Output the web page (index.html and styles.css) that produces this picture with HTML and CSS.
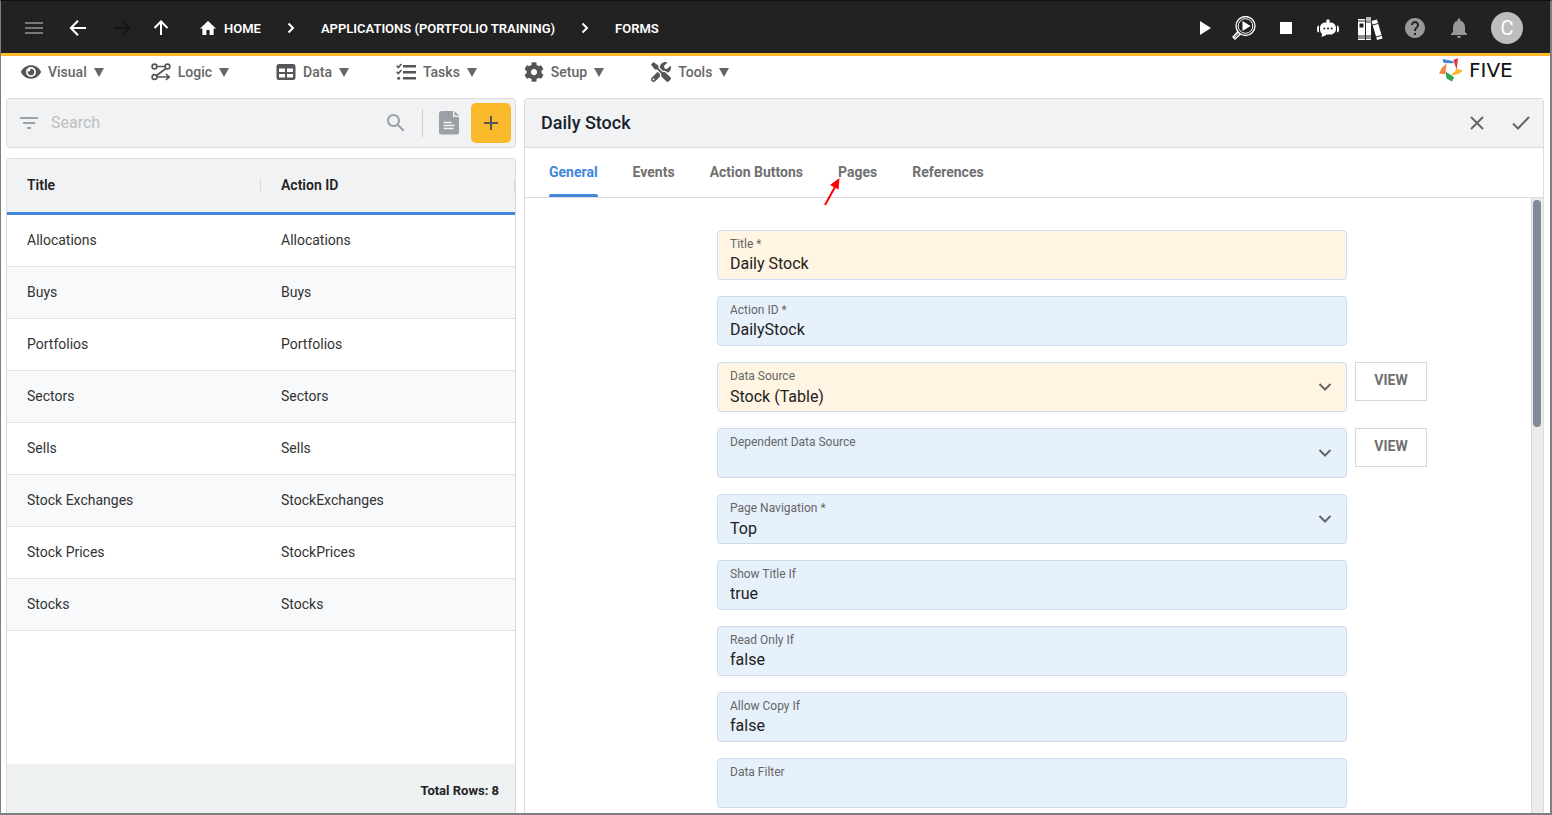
FILE: index.html
```
<!DOCTYPE html>
<html lang="en">
<head>
<meta charset="utf-8">
<title>Five - Forms</title>
<link rel="stylesheet" href="styles.css">
</head>
<body>
<div class="app">
  <header class="topbar">
    <button class="icon-btn dim" aria-label="Menu"><svg width="24" height="24" viewBox="0 0 24 24"><path d="M3 18h18v-2H3v2zm0-5h18v-2H3v2zm0-7v2h18V6H3z"/></svg></button>
    <button class="icon-btn" aria-label="Back"><svg width="24" height="24" viewBox="0 0 24 24"><path class="line" d="M20 12H5M12 4.700 4.800 12l7.200 7.300"/></svg></button>
    <button class="icon-btn off" aria-label="Forward" disabled><svg width="24" height="24" viewBox="0 0 24 24"><path class="line" d="M4 12h15M12 4.700 19.200 12 12 19.300"/></svg></button>
    <button class="icon-btn up" aria-label="Up"><svg width="24" height="24" viewBox="0 0 24 24"><path class="line" d="M12 19V6M5.500 12 12 5.500l6.500 6.500"/></svg></button>
    <nav class="crumbs" aria-label="Breadcrumb">
      <a class="crumb" href="#"><svg width="16" height="14" viewBox="2 3 20 17" preserveAspectRatio="none"><path d="M10 20v-6h4v6h5v-8h3L12 3 2 12h3v8z"/></svg>HOME</a>
      <svg width="10" height="12" viewBox="0 0 10 12"><path class="line" d="M2.500 1.500 7 6l-4.500 4.500"/></svg>
      <a class="crumb" href="#">APPLICATIONS (PORTFOLIO TRAINING)</a>
      <svg width="10" height="12" viewBox="0 0 10 12"><path class="line" d="M2.500 1.500 7 6l-4.500 4.500"/></svg>
      <a class="crumb" href="#">FORMS</a>
    </nav>
    <div class="actions">
      <button class="tool run" aria-label="Run"><svg width="12" height="14" viewBox="0 0 12 14"><path d="M1 0v14l11-7z"/></svg></button>
      <button class="tool" aria-label="Inspect"><svg width="24" height="24" viewBox="0 0 24 24"><circle cx="13.500" cy="10" r="9.500" fill="none" stroke="#fff" stroke-width="1.300"/><circle cx="13.500" cy="10" r="7.300" fill="none" stroke="#fff" stroke-width="1"/><path d="M10.500 5v10l8-5z"/><path d="M6 15.500 1 21l2 2 5.500-5" fill="none" stroke="#fff" stroke-width="1.400"/><path d="M7 16.500 2 22" stroke="#fff"/></svg></button>
      <button class="tool" aria-label="Stop"><svg width="12" height="12" viewBox="0 0 12 12"><path d="M0 0h12v12H0z"/></svg></button>
      <button class="tool" aria-label="Assistant"><svg width="22" height="18" viewBox="0 0 22 18"><circle cx="11" cy="2" r="1.700"/><path d="M10 2h2v3h-2z"/><path d="M8.500 3.500h5c3.500 0 5.500 2.500 5.500 6s-2 6-5.500 6h-4C8 17 6.500 17.500 4 17.500c1-.8 1.200-1.700 1-2.500C3.500 14 3 12 3 9.500c0-3.500 2-6 5.500-6zM2 6.500v7c-1.300 0-2-.8-2-3.500s.7-3.500 2-3.500zM20 6.500v7c1.300 0 2-.8 2-3.500s-.7-3.500-2-3.500z"/><g fill="#222"><circle cx="7.300" cy="9.500" r="1"/><circle cx="11" cy="9.500" r="1"/><circle cx="14.700" cy="9.500" r="1"/></g></svg></button>
      <button class="tool" aria-label="Library"><svg width="25" height="25" viewBox="0 0 25 25"><path d="M0 3h7v21H0zM8 1h5v23H8zM13.500 5l5.500-1.500 5.500 19-5.500 1.500z"/><path fill="#bbb" d="M8 1h5v4H8z"/><path d="M1.500 7.500h4v4h-4z" fill="#222"/><path d="M0 5h7M0 20h13M0 22h13M8 6h5M14.500 9l5.500-1.500M18 21l5.500-1.500" stroke="#222" stroke-width="1"/></svg></button>
      <button class="tool grey first" aria-label="Help"><svg width="24" height="24" viewBox="0 0 24 24"><path d="M12 2C6.480 2 2 6.480 2 12s4.480 10 10 10 10-4.480 10-10S17.520 2 12 2zm1 17h-2v-2h2v2zm2.070-7.750-.9.920C13.450 12.900 13 13.500 13 15h-2v-.5c0-1.100.45-2.100 1.170-2.830l1.240-1.260c.37-.36.590-.86.590-1.410 0-1.100-.9-2-2-2s-2 .9-2 2H8c0-2.210 1.790-4 4-4s4 1.790 4 4c0 .88-.36 1.680-.93 2.250z"/></svg></button>
      <button class="tool grey" aria-label="Notifications"><svg width="24" height="24" viewBox="0 0 24 24"><path d="M12 22c1.100 0 2-.9 2-2h-4c0 1.100.89 2 2 2zm6-6v-5c0-3.070-1.640-5.640-4.500-6.320V4c0-.83-.67-1.500-1.500-1.500s-1.500.67-1.500 1.500v.68C7.630 5.360 6 7.920 6 11v5l-2 2v1h16v-1l-2-2z"/></svg></button>
      <button class="avatar" aria-label="Account">C</button>
    </div>
  </header>

  <div class="menubar">
    <nav class="menus">
      <button class="menu"><svg width="20" height="20" viewBox="0 0 576 512"><path d="M572.520 241.400C518.290 135.590 410.930 64 288 64S57.680 135.640 3.480 241.410a32.350 32.350 0 0 0 0 29.190C57.710 376.410 165.070 448 288 448s230.320-71.640 284.520-177.410a32.350 32.350 0 0 0 0-29.190zM288 400a144 144 0 1 1 144-144 143.930 143.930 0 0 1-144 144zm0-240a95.310 95.310 0 0 0-25.310 3.790 47.850 47.850 0 0 1-66.900 66.900A95.780 95.780 0 1 0 288 160z"/></svg><span>Visual</span><i class="caret"></i></button>
      <button class="menu"><svg width="20" height="20" viewBox="0 0 20 20"><g fill="none" stroke="#555" stroke-width="1.600"><circle cx="3.500" cy="4.500" r="2.400"/><circle cx="16.500" cy="4.500" r="2.400"/><circle cx="3.500" cy="15" r="2.400"/><path d="M6 4.500h8M15 6.500 5.500 13.500M6 15h12M15 12l3.200 3-3.200 3"/></g></svg><span>Logic</span><i class="caret"></i></button>
      <button class="menu"><svg width="20" height="20" viewBox="0 0 20 20"><path fill-rule="evenodd" d="M3 2h14a2.500 2.500 0 0 1 2.500 2.500v11A2.500 2.500 0 0 1 17 18H3a2.500 2.500 0 0 1-2.500-2.500v-11A2.500 2.500 0 0 1 3 2zm0 4.500v3.500h6V6.500zm8 0v3.500h6V6.500zM3 12v3.500h6V12zm8 0v3.500h6V12z"/></svg><span>Data</span><i class="caret"></i></button>
      <button class="menu"><svg width="20" height="20" viewBox="0 0 20 20"><path d="M7 3h13v2.500H7zM7 9h13v2.500H7zM7 15h13v2.500H7z"/><circle cx="2.700" cy="16.300" r="1.500"/><path d="m.7 3.800 1.600 1.700 3.200-3.500M.7 9.800l1.600 1.700L5.500 8" fill="none" stroke="#555" stroke-width="1.600"/></svg><span>Tasks</span><i class="caret"></i></button>
      <button class="menu"><svg width="20" height="20" viewBox="0 0 512 512"><path d="M487.400 315.700l-42.600-24.600c4.300-23.200 4.300-47 0-70.200l42.600-24.600c4.900-2.800 7.100-8.600 5.500-14-11.100-35.600-30-67.800-54.700-94.600-3.800-4.100-10-5.100-14.800-2.300L380.800 110c-17.900-15.400-38.500-27.300-60.800-35.100V25.800c0-5.600-3.900-10.500-9.400-11.700-36.700-8.200-74.300-7.800-109.200 0-5.500 1.200-9.400 6.100-9.400 11.700V75c-22.200 7.900-42.800 19.800-60.800 35.100L88.700 85.500c-4.900-2.800-11-1.900-14.800 2.300-24.700 26.700-43.600 58.900-54.700 94.600-1.700 5.400.6 11.200 5.500 14L67.300 221c-4.300 23.200-4.300 47 0 70.200l-42.600 24.600c-4.900 2.800-7.100 8.600-5.500 14 11.100 35.600 30 67.800 54.700 94.600 3.800 4.100 10 5.100 14.800 2.300l42.600-24.600c17.900 15.400 38.500 27.300 60.800 35.100v49.200c0 5.600 3.900 10.500 9.400 11.700 36.700 8.200 74.300 7.800 109.200 0 5.500-1.200 9.400-6.100 9.400-11.700v-49.200c22.200-7.900 42.800-19.800 60.800-35.100l42.600 24.600c4.900 2.800 11 1.900 14.800-2.300 24.700-26.700 43.600-58.900 54.700-94.600 1.500-5.500-.7-11.300-5.600-14.100zM256 336c-44.100 0-80-35.900-80-80s35.900-80 80-80 80 35.900 80 80-35.900 80-80 80z"/></svg><span>Setup</span><i class="caret"></i></button>
      <button class="menu"><svg width="20" height="20" viewBox="0 0 512 512"><path d="M501.100 395.700L384 278.600c-23.100-23.100-57.600-27.600-85.400-13.900L192 158.100V96L64 0 0 64l96 128h62.100l106.600 106.600c-13.600 27.800-9.200 62.300 13.900 85.400l117.100 117.100c14.600 14.600 38.200 14.600 52.700 0l52.700-52.700c14.500-14.600 14.500-38.200 0-52.700zM331.700 225c28.300 0 54.900 11 74.900 31l19.400 19.400c15.800-6.900 30.800-16.500 43.800-29.500 37.100-37.100 49.700-89.300 37.900-136.700-2.200-9-13.500-12.100-20.100-5.500l-74.400 74.400-67.900-11.300L334 98.900l74.400-74.400c6.600-6.600 3.400-17.900-5.700-20.200-47.400-11.700-99.600.9-136.600 37.900-28.500 28.500-41.900 66.100-41.200 103.600l82.100 82.100c8.100-1.900 16.500-2.900 24.700-2.900zm-103.900 82l-56.700-56.700L18.700 402.800c-25 25-25 65.500 0 90.500s65.500 25 90.500 0l123.600-123.600c-7.600-19.900-9.900-41.600-5-62.700zM64 472c-13.200 0-24-10.800-24-24 0-13.300 10.700-24 24-24s24 10.700 24 24c0 13.200-10.700 24-24 24z"/></svg><span>Tools</span><i class="caret"></i></button>
    </nav>
    <a class="brand" href="#">
      <svg width="24" height="24" viewBox="0 0 24 24"><path fill="#4286dc" d="M3.500 1l1 4L15 5.300 13.500 3z"/><path fill="#e5353c" d="M19 .3 14.300 2l3.400 10z"/><path fill="#fbb829" d="M24 12.700l-5.500-2L11.500 17.500l8-1.500z"/><path fill="#34a556" d="M6.500 13.500l8.700 5.800-2.300 4.200L7.500 20.500z"/><path fill="#f5823a" d="M7.700 5.300 6 16.300l-6-.8 2.700-5.200z"/></svg>
      <span>FIVE</span>
    </a>
  </div>

  <main class="workspace">
    <section class="side">
      <div class="searchbar">
        <svg width="24" height="24" viewBox="0 0 24 24"><path d="M10 18h4v-2h-4v2zM3 6v2h18V6H3zm3 7h12v-2H6v2z"/></svg>
        <input class="search" type="text" placeholder="Search" aria-label="Search">
        <button class="plain" aria-label="Find"><svg width="24" height="24" viewBox="0 0 24 24"><path d="M15.500 14h-.79l-.28-.27C15.410 12.590 16 11.110 16 9.500 16 5.910 13.090 3 9.500 3S3 5.910 3 9.500 5.910 16 9.500 16c1.610 0 3.090-.59 4.230-1.570l.27.28v.79l5 4.990L20.490 19l-4.990-5zm-6 0C7.010 14 5 11.990 5 9.500S7.010 5 9.500 5 14 7.010 14 9.500 11.990 14 9.500 14z"/></svg></button>
        <span class="rule"></span>
        <button class="plain" aria-label="Document"><svg width="20" height="24" viewBox="0 0 20 24"><path d="M3 0h11v6h6v15a2.500 2.500 0 0 1-2.500 2.500h-15A2.500 2.500 0 0 1 0 21V3a3 3 0 0 1 3-3zm12.500 0L20 4.500h-4.500z"/><path d="M4.500 11.500h8M4.500 14.500h11M4.500 17.500h10" stroke="#f1f2f4" stroke-width="1.300"/></svg></button>
        <button class="add" aria-label="Add"><svg width="14" height="14" viewBox="0 0 14 14"><path d="M6 0h2v6h6v2H8v6H6V8H0V6h6z"/></svg></button>
      </div>
      <div class="grid">
        <table class="rows">
          <thead><tr><th>Title</th><th>Action ID</th></tr></thead>
          <tbody>
            <tr><td>Allocations</td><td>Allocations</td></tr>
            <tr><td>Buys</td><td>Buys</td></tr>
            <tr><td>Portfolios</td><td>Portfolios</td></tr>
            <tr><td>Sectors</td><td>Sectors</td></tr>
            <tr><td>Sells</td><td>Sells</td></tr>
            <tr><td>Stock Exchanges</td><td>StockExchanges</td></tr>
            <tr><td>Stock Prices</td><td>StockPrices</td></tr>
            <tr><td>Stocks</td><td>Stocks</td></tr>
          </tbody>
        </table>
        <div class="total">Total Rows: 8</div>
      </div>
    </section>

    <section class="detail">
      <div class="detail-head">
        <h1>Daily Stock</h1>
        <button class="plain" aria-label="Cancel"><svg width="14" height="14" viewBox="0 0 14 14"><path class="thin" d="m1 1 12 12M13 1 1 13"/></svg></button>
        <button class="plain" aria-label="Save"><svg width="18" height="14" viewBox="0 0 18 14"><path class="thin" d="m1 7.500 5 5L17 1"/></svg></button>
      </div>
      <div class="tabs">
        <button class="tab active">General</button>
        <button class="tab">Events</button>
        <button class="tab">Action Buttons</button>
        <button class="tab">Pages<svg class="pointer" width="18" height="30" viewBox="0 0 18 30"><path d="M1 28 11 10" stroke="#f00" stroke-width="2"/><path fill="#f00" d="M15.500 1 6 8l8.500 4.500z"/></svg></button>
        <button class="tab">References</button>
      </div>
      <div class="body">
        <form class="form">
          <label class="field edited"><span>Title *</span><input type="text" value="Daily Stock"></label>
          <label class="field"><span>Action ID *</span><input type="text" value="DailyStock"></label>
          <label class="field edited"><span>Data Source</span><select><option>Stock (Table)</option></select><svg class="chev" width="14" height="8" viewBox="0 0 14 8"><path d="m1.500 1 5.500 5.500L12.500 1"/></svg></label>
          <button class="view" type="button">VIEW</button>
          <label class="field"><span>Dependent Data Source</span><select><option></option></select><svg class="chev" width="14" height="8" viewBox="0 0 14 8"><path d="m1.500 1 5.500 5.500L12.500 1"/></svg></label>
          <button class="view" type="button">VIEW</button>
          <label class="field"><span>Page Navigation *</span><select><option>Top</option></select><svg class="chev" width="14" height="8" viewBox="0 0 14 8"><path d="m1.500 1 5.500 5.500L12.500 1"/></svg></label>
          <label class="field"><span>Show Title If</span><input type="text" value="true"></label>
          <label class="field"><span>Read Only If</span><input type="text" value="false"></label>
          <label class="field"><span>Allow Copy If</span><input type="text" value="false"></label>
          <label class="field"><span>Data Filter</span><input type="text"></label>
        </form>
        <div class="rail"><div class="thumb"></div></div>
      </div>
    </section>
  </main>
</div>
</body>
</html>
```
FILE: styles.css
```
* { box-sizing: border-box; }
body { margin: 0; font-family: Roboto, "Liberation Sans", sans-serif; color: #222; background: #fff; }
button { border: 0; padding: 0; margin: 0; background: none; font-family: inherit; cursor: pointer; }
a { color: inherit; text-decoration: none; }
svg { display: block; flex: none; }

.app {
  height: 100vh;
  display: flex;
  flex-direction: column;
  overflow: hidden;
  border: solid #7f7f7f;
  border-width: 1px 2px 2px 1px;
  border-top-color: #111;
}

.topbar {
  flex: none;
  height: 55px;
  display: flex;
  align-items: center;
  padding: 2px 27px 0 21px;
  background: #222;
  border-bottom: 3px solid #fbb829;
  color: #fff;
}
.topbar svg { fill: #fff; }
.topbar .line { fill: none; stroke: #fff; stroke-width: 2; }
.icon-btn { margin-right: 20px; }
.icon-btn.dim svg { fill: #777; }
.icon-btn.off { margin-right: 15px; }
.icon-btn.off .line { stroke: #141414; }
.icon-btn.up { margin-right: 27px; }
.crumbs { display: flex; align-items: center; gap: 25px; font-size: 13px; font-weight: 600; }
.crumb { display: flex; align-items: center; gap: 8px; }
.actions { margin-left: auto; display: flex; align-items: center; }
.tool { width: 42px; display: flex; justify-content: center; }
.tool.run { width: 36px; }
.tool.grey { width: 44px; }
.tool.first { margin-left: 2px; }
.tool.grey svg { fill: #999; }
.avatar { width: 32px; height: 32px; margin-left: 10px; border-radius: 50%; background: #bdbdbd; color: #fff; font-size: 20px; }

.menubar { flex: none; height: 42px; display: flex; justify-content: space-between; padding: 0 23px 10px 20px; }
.menus { display: flex; gap: 47px; }
.menu { display: flex; align-items: center; color: #666; font-size: 14px; font-weight: 500; }
.menu svg { fill: #555; margin-right: 7px; }
.menu span { margin-right: 7px; }
.caret { border: 5px solid transparent; border-top: 9px solid #666; border-bottom: 0; }
.brand { display: flex; align-items: center; gap: 6px; padding-bottom: 4px; color: #111; font-family: "DejaVu Sans", sans-serif; font-size: 20px; line-height: 24px; }
.brand span { width: 58px; }

.workspace { flex: 1; min-height: 0; display: grid; grid-template-columns: 1fr 2fr; gap: 8px; padding: 0 6px 0 5px; }
.side { min-width: 0; min-height: 0; display: flex; flex-direction: column; gap: 10px; }
.searchbar {
  flex: none;
  height: 50px;
  display: flex;
  align-items: center;
  padding: 0 4px 0 10px;
  background: #f1f2f4;
  border: 1px solid #dcdcdc;
  border-radius: 4px;
}
.searchbar svg { fill: #9aa0a6; }
.search { flex: 1; min-width: 0; margin: 0 10px; padding: 0 0 2px; border: 0; outline: 0; background: none; font-family: inherit; font-size: 16px; }
.search::placeholder { color: #bdbfc2; }
.rule { width: 1px; height: 28px; margin: 0 16px 0 14px; background: #ccc; }
.searchbar .add { width: 40px; height: 40px; margin-left: 12px; display: grid; place-items: center; border-radius: 5px; background: #f9b92b; }
.searchbar .add svg { fill: #555; }

.grid { flex: 1; min-height: 0; display: flex; flex-direction: column; border: 1px solid #dcdcdc; border-bottom: 0; border-radius: 4px 4px 0 0; overflow: hidden; }
.rows { width: 100%; table-layout: fixed; border-collapse: separate; border-spacing: 0; font-size: 14px; text-align: left; }
.rows th { position: relative; height: 56px; padding: 0 20px 2px; background: #f1f2f4; border-bottom: 3px solid #4286dc; font-weight: 600; }
.rows th::after { content: ""; position: absolute; right: -1px; top: 20px; width: 2px; height: 14px; background: #dcdcdc; }
.rows td { height: 52px; padding: 0 20px 2px; border-bottom: 1px solid #e2e2e2; color: #333; }
.rows tr:nth-child(even) td { background: #f7f9fb; }
.total { margin-top: auto; height: 49px; padding: 2px 16px 0; line-height: 50px; text-align: right; font-size: 13px; font-weight: 700; background: #eef2f3; }

.detail { min-width: 0; min-height: 0; display: flex; flex-direction: column; border: 1px solid #dcdcdc; border-bottom: 0; border-radius: 4px 4px 0 0; }
.detail-head { flex: none; height: 49px; display: flex; align-items: center; gap: 28px; padding: 0 13px 0 16px; background: #f1f2f4; border-bottom: 1px solid #dcdcdc; }
.detail-head h1 { flex: 1; margin: 0; padding-bottom: 2px; font-size: 18px; font-weight: 500; color: #1a1f2e; }
.thin { fill: none; stroke: #666; stroke-width: 2; }
.tabs { flex: none; height: 50px; display: flex; gap: 35px; padding: 0 24px; border-bottom: 1px solid #dcdcdc; }
.tab { position: relative; padding-top: 1px; color: #707070; font-size: 14px; font-weight: 700; border-bottom: 3px solid transparent; }
.tab.active { color: #4286dc; }
.tab.active::after { content: ""; position: absolute; left: 0; right: 0; bottom: -3px; height: 3px; border-radius: 2px 2px 0 0; background: #4286dc; }
.pointer { position: absolute; left: -14px; top: 29px; }

.body { flex: 1; min-height: 0; display: flex; }
.form {
  flex: 1;
  display: grid;
  grid-template-columns: 192fr 630fr 8px 176fr;
  grid-auto-rows: 50px;
  row-gap: 16px;
  padding-top: 32px;
  overflow-y: auto;
  scrollbar-width: none;
}
.field { grid-column: 2; position: relative; display: flex; flex-direction: column; padding: 5px 12px 0; border: 1px solid #cbdcec; border-radius: 4px; background: #e7f1fc; }
.field.edited { background: #fff5e2; }
.field span { font-size: 12px; line-height: 16px; color: #666; }
.field input, .field select { width: 100%; height: 22px; margin: 0; padding: 0; border: 0; outline: 0; background: none; color: #212121; font-family: inherit; font-size: 16px; appearance: none; }
.field select { height: 24px; }
.chev { position: absolute; right: 14px; top: 20px; fill: none; stroke: #666; stroke-width: 2; pointer-events: none; }
.view { grid-column: 4; justify-self: start; width: 72px; height: 39px; padding-bottom: 3px; border: 1px solid #d8d8d8; background: #fff; color: #707070; font-size: 14px; font-weight: 700; }
.rail { flex: none; width: 12px; padding: 2px 2px 0 1px; background: #ebebeb; border-left: 1px solid #d5d5d5; }
.thumb { height: 37%; border-radius: 4px; background: #808a9a; }
```
